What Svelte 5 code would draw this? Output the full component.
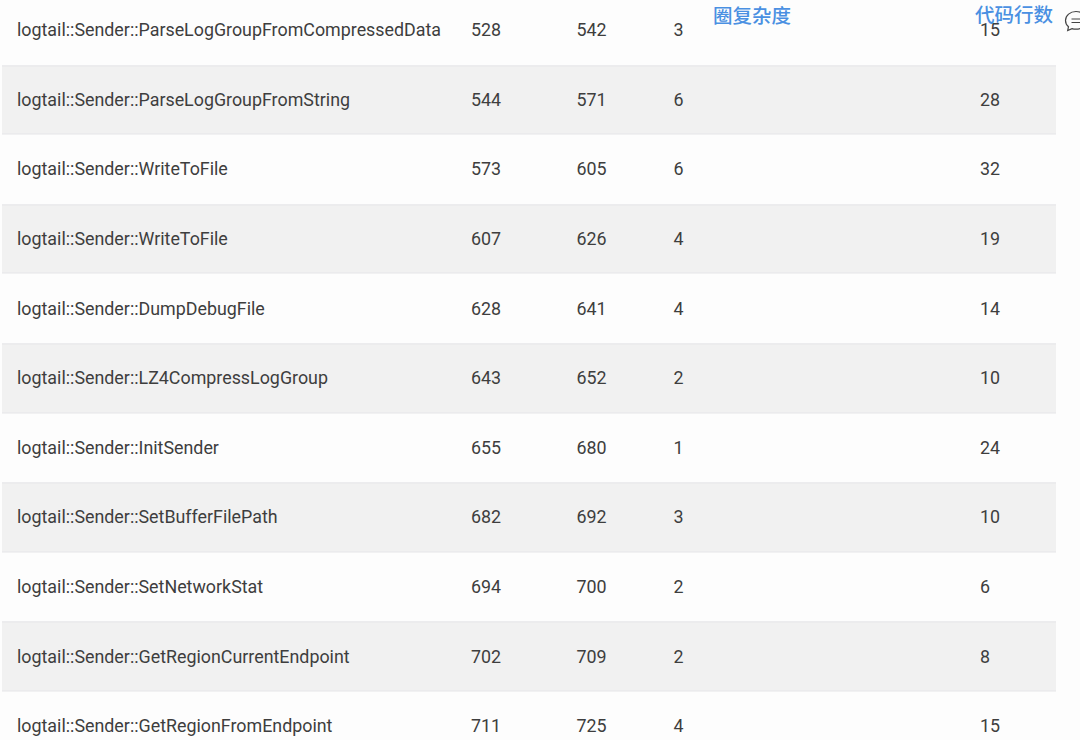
<script>
  const rows = [
    ['logtail::Sender::ParseLogGroupFromCompressedData', 528, 542, 3, 15],
    ['logtail::Sender::ParseLogGroupFromString', 544, 571, 6, 28],
    ['logtail::Sender::WriteToFile', 573, 605, 6, 32],
    ['logtail::Sender::WriteToFile', 607, 626, 4, 19],
    ['logtail::Sender::DumpDebugFile', 628, 641, 4, 14],
    ['logtail::Sender::LZ4CompressLogGroup', 643, 652, 2, 10],
    ['logtail::Sender::InitSender', 655, 680, 1, 24],
    ['logtail::Sender::SetBufferFilePath', 682, 692, 3, 10],
    ['logtail::Sender::SetNetworkStat', 694, 700, 2, 6],
    ['logtail::Sender::GetRegionCurrentEndpoint', 702, 709, 2, 8],
    ['logtail::Sender::GetRegionFromEndpoint', 711, 725, 4, 15]
  ];
</script>

<div class="page">
  <div class="table">
    {#each rows as row, i}
      <div class="row" class:alt={i % 2 === 1}>
        <span>{row[0]}</span>
        <span>{row[1]}</span>
        <span>{row[2]}</span>
        <span>{row[3]}</span>
        <span>{row[4]}</span>
      </div>
    {/each}
  </div>

  <span class="head head-cc">圈复杂度</span>
  <span class="head head-loc">代码行数</span>

  <svg class="comment" width="22" height="22" viewBox="0 0 22 22" fill="none" stroke="#444" stroke-width="1.2">
    <path d="M12 1.500c-5.800 0-10.500 3.900-10.500 9 0 2.500 1.100 4.600 3 6.200l-.8 3.800 4.300-1.900c1.200.4 2.600.6 4 .6 5.800 0 10.500-3.700 10.500-8.700S17.800 1.500 12 1.500z" />
    <path d="M7.500 9h9M7.500 12.500h9" />
  </svg>
</div>

<style>
  :global(body) {
    background: #fff;
  }

  .page {
    position: relative;
    width: 1080px;
    height: 740px;
    overflow: hidden;
    background: #fdfdfd;
    font-family: Roboto, "Liberation Sans", sans-serif;
    font-size: 17.85px;
    color: #3e3e3e;
  }

  .table {
    width: 1054px;
    margin-left: 2px;
    transform: translateY(-4.6px);
  }

  .row {
    display: grid;
    grid-template-columns: 454px 105.500px 97px 306.500px 1fr;
    align-items: center;
    height: 69.6px;
    box-sizing: border-box;
    padding-left: 15px;
  }

  .row.alt {
    background: #f1f1f1;
    border-top: 1px solid #e7e7e9;
    border-bottom: 1px solid #e7e7e9;
  }

  .head {
    position: absolute;
    font-family: "Noto Sans CJK SC", sans-serif;
    font-size: 19.5px;
    font-weight: 500;
    line-height: 28px;
    color: #4a90e2;
  }

  .head-cc {
    left: 713px;
    top: 1px;
  }

  .head-loc {
    left: 975px;
    top: 0;
  }

  .comment {
    position: absolute;
    left: 1064px;
    top: 10px;
  }
</style>
